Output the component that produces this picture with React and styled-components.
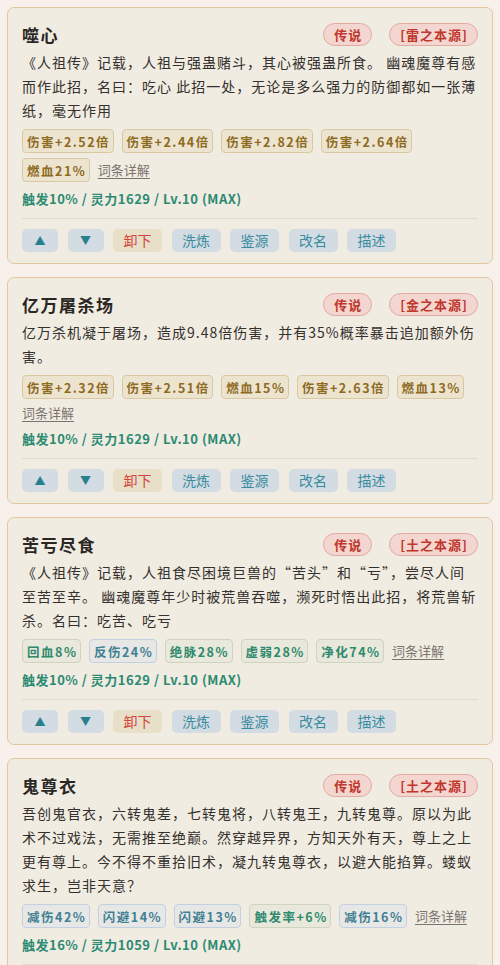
import React from 'react';
import styled, { createGlobalStyle } from 'styled-components';

const GlobalStyle = createGlobalStyle`
  html, body {
    margin: 0;
    padding: 0;
    background: #f8f0ea;
  }
  body {
    font-family: "Noto Sans CJK SC", "Noto Sans", sans-serif;
    color: #2f2b28;
  }
`;

const skills = [
  {
    name: '噬心',
    origin: '[雷之本源]',
    desc: '《人祖传》记载，人祖与强蛊赌斗，其心被强蛊所食。 幽魂魔尊有感而作此招，名曰：吃心 此招一处，无论是多么强力的防御都如一张薄纸，毫无作用',
    tags: [
      ['伤害+2.52倍', 'gold'],
      ['伤害+2.44倍', 'gold'],
      ['伤害+2.82倍', 'gold'],
      ['伤害+2.64倍', 'gold'],
      ['燃血21%', 'gold'],
    ],
    stats: '触发10% / 灵力1629 / Lv.10 (MAX)',
  },
  {
    name: '亿万屠杀场',
    origin: '[金之本源]',
    desc: '亿万杀机凝于屠场，造成9.48倍伤害，并有35%概率暴击追加额外伤害。',
    tags: [
      ['伤害+2.32倍', 'gold'],
      ['伤害+2.51倍', 'gold'],
      ['燃血15%', 'gold'],
      ['伤害+2.63倍', 'gold'],
      ['燃血13%', 'gold'],
    ],
    stats: '触发10% / 灵力1629 / Lv.10 (MAX)',
  },
  {
    name: '苦亏尽食',
    origin: '[土之本源]',
    desc: '《人祖传》记载，人祖食尽困境巨兽的“苦头”和“亏”，尝尽人间至苦至辛。 幽魂魔尊年少时被荒兽吞噬，濒死时悟出此招，将荒兽斩杀。名曰：吃苦、吃亏',
    tags: [
      ['回血8%', 'green'],
      ['反伤24%', 'blue'],
      ['绝脉28%', 'green'],
      ['虚弱28%', 'green'],
      ['净化74%', 'green'],
    ],
    stats: '触发10% / 灵力1629 / Lv.10 (MAX)',
  },
  {
    name: '鬼尊衣',
    origin: '[土之本源]',
    desc: '吾创鬼官衣，六转鬼差，七转鬼将，八转鬼王，九转鬼尊。原以为此术不过戏法，无需推至绝巅。然穿越异界，方知天外有天，尊上之上更有尊上。今不得不重拾旧术，凝九转鬼尊衣，以避大能掐算。蝼蚁求生，岂非天意？',
    tags: [
      ['减伤42%', 'blue'],
      ['闪避14%', 'blue'],
      ['闪避13%', 'blue'],
      ['触发率+6%', 'green'],
      ['减伤16%', 'blue'],
    ],
    stats: '触发16% / 灵力1059 / Lv.10 (MAX)',
  },
];

const tagColors = {
  gold: { bg: '#ede4d0', border: '#d8c9a2', text: '#8d6b1f' },
  green: { bg: '#e9e8dc', border: '#d0d3bd', text: '#2f8a6d' },
  blue: { bg: '#e7e7e5', border: '#c3d0e2', text: '#3f8093' },
};

const Page = styled.div`
  display: flex;
  flex-direction: column;
  gap: 13px;
  padding: 7px;
`;

const Card = styled.section`
  background: #f1ece2;
  border: 1px solid #e2c7a0;
  border-radius: 7px;
  padding: 14px 14px 11px;
`;

const Header = styled.div`
  display: flex;
  align-items: center;
  justify-content: space-between;
  height: 24px;
`;

const Title = styled.h3`
  margin: 0;
  font-size: 17px;
  font-weight: 700;
  letter-spacing: 1.5px;
  color: #2a2624;
`;

const Badges = styled.div`
  display: flex;
  gap: 17px;
`;

const Badge = styled.span`
  display: inline-flex;
  align-items: center;
  height: 21px;
  padding: 0 9px 0 10px;
  border: 1px solid #e2aaa2;
  border-radius: 12px;
  background: #f3d6d0;
  color: #c1372d;
  font-size: 13px;
  font-weight: 700;
  letter-spacing: 1px;
`;

const Desc = styled.p`
  margin: 4px 0 0;
  font-size: 14px;
  line-height: 24px;
  letter-spacing: 1px;
  color: #33302d;
`;

const Tags = styled.div`
  display: flex;
  flex-wrap: wrap;
  align-items: center;
  gap: 5px 8px;
  margin-top: 7px;
`;

const Tag = styled.span`
  display: inline-flex;
  align-items: center;
  box-sizing: border-box;
  height: 24px;
  padding: 0 2.5px 0 4px;
  border: 1px solid ${(p) => tagColors[p.$tone].border};
  border-radius: 4px;
  background: ${(p) => tagColors[p.$tone].bg};
  color: ${(p) => tagColors[p.$tone].text};
  font-size: 12.5px;
  font-weight: 700;
  letter-spacing: 1.5px;
`;

const DetailLink = styled.a`
  font-size: 13px;
  line-height: 18px;
  color: #7a7470;
  text-decoration: underline;
  text-underline-offset: 3px;
  cursor: pointer;
`;

const Stats = styled.div`
  margin: 8px 0 10px;
  font-size: 13px;
  line-height: 18px;
  font-weight: 700;
  letter-spacing: 0.5px;
  color: #2b8a72;
`;

const Actions = styled.div`
  display: flex;
  gap: 9.5px;
  padding-top: 10px;
  border-top: 1px solid #e2dccf;
`;

const Button = styled.button`
  height: 23px;
  min-width: 36px;
  padding: 0 10.5px;
  border: 0;
  border-radius: 5px;
  background: ${(p) => (p.$danger ? '#e8dfc9' : '#d4dce3')};
  color: ${(p) => (p.$danger ? '#d2463b' : '#3a8ca0')};
  font-family: "Noto Sans CJK SC", sans-serif;
  font-size: 14px;
  line-height: 23px;
  cursor: pointer;
`;

const Arrow = styled(Button)`
  width: 36px;
  padding: 0;
  font-size: 11px;
  color: #2a7f8f;
`;

const SkillCard = ({ skill }) => (
  <Card>
    <Header>
      <Title>{skill.name}</Title>
      <Badges>
        <Badge>传说</Badge>
        <Badge>{skill.origin}</Badge>
      </Badges>
    </Header>
    <Desc>{skill.desc}</Desc>
    <Tags>
      {skill.tags.map(([label, tone], i) => (
        <Tag key={i} $tone={tone}>{label}</Tag>
      ))}
      <DetailLink>词条详解</DetailLink>
    </Tags>
    <Stats>{skill.stats}</Stats>
    <Actions>
      <Arrow>▲</Arrow>
      <Arrow>▼</Arrow>
      <Button $danger>卸下</Button>
      <Button>洗炼</Button>
      <Button>鉴源</Button>
      <Button>改名</Button>
      <Button>描述</Button>
    </Actions>
  </Card>
);

export default function App() {
  return (
    <>
      <GlobalStyle />
      <Page>
        {skills.map((s) => (
          <SkillCard key={s.name} skill={s} />
        ))}
      </Page>
    </>
  );
}
